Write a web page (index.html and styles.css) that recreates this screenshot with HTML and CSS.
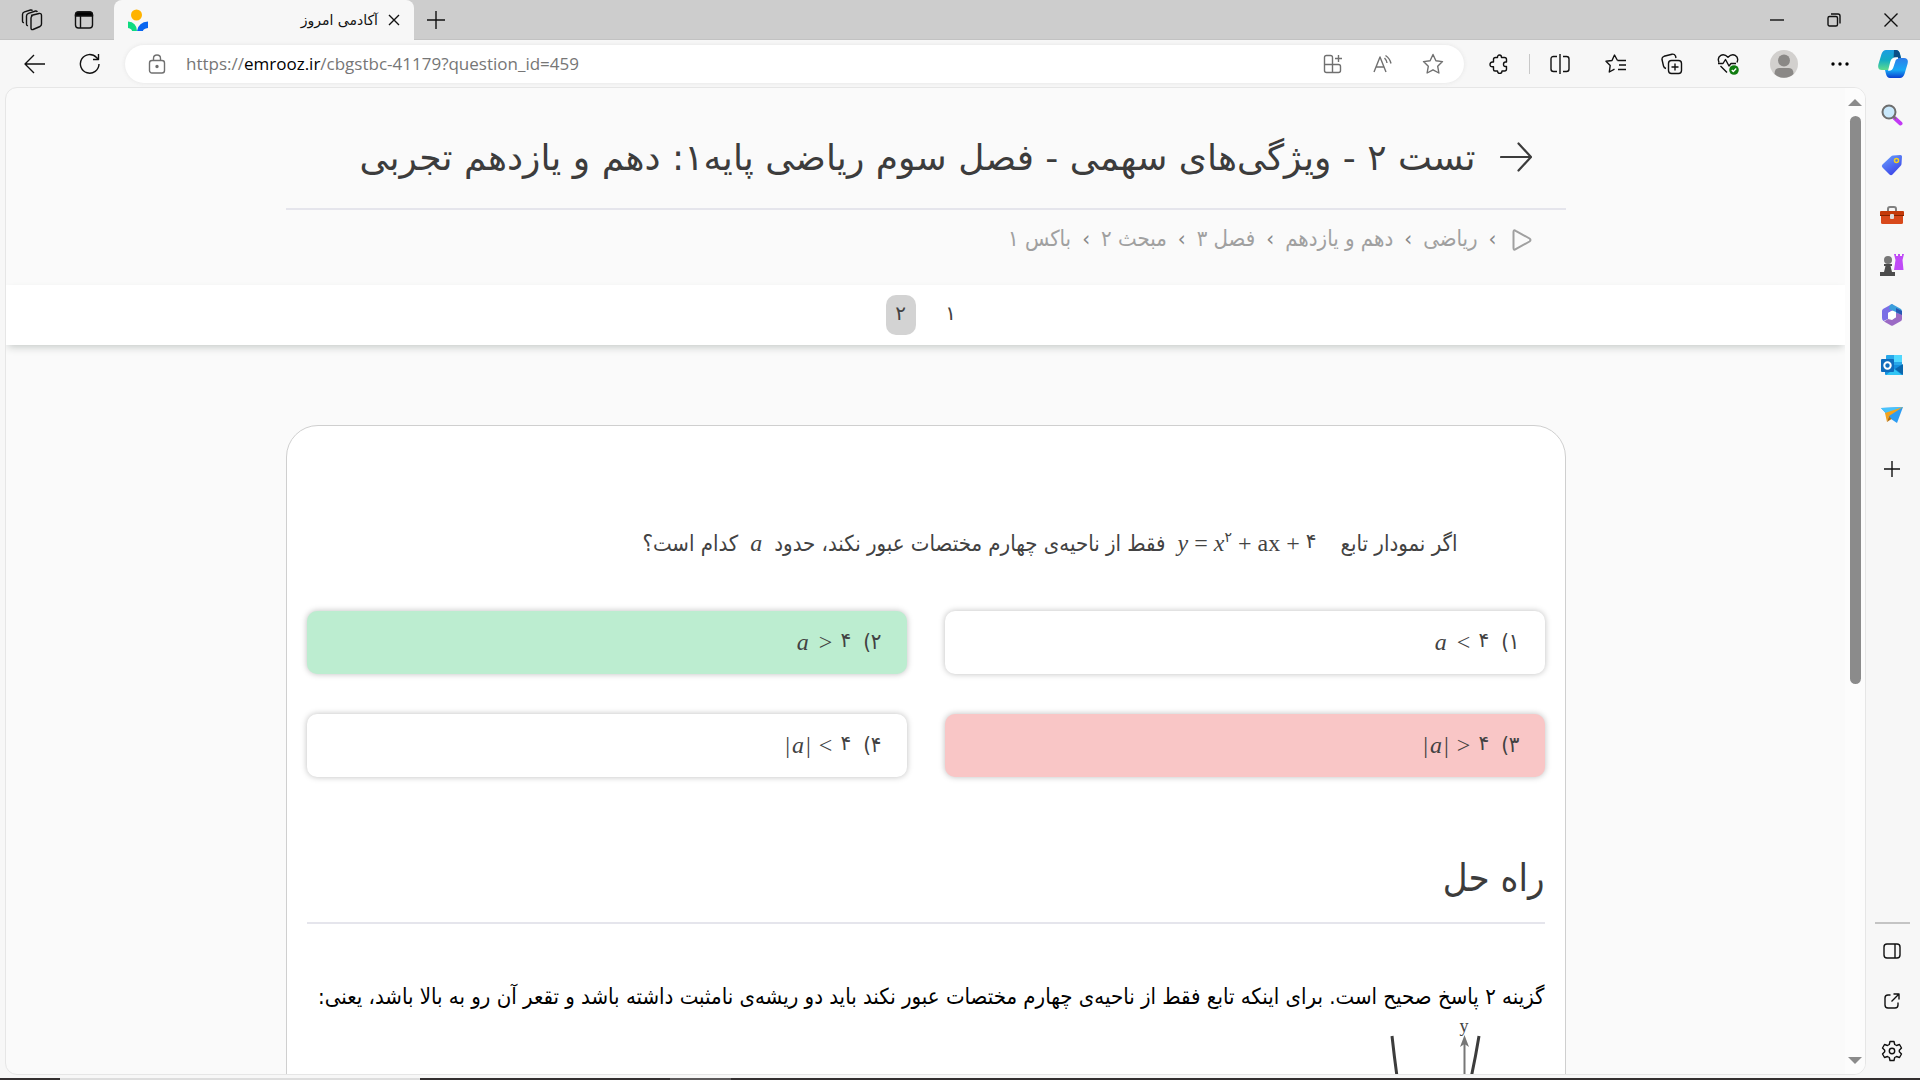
FILE: index.html
```html
<!DOCTYPE html>
<html lang="fa">
<head>
<meta charset="utf-8">
<title>آکادمی امروز</title>
<link rel="stylesheet" href="styles.css">
</head>
<body>
<div class="window">
  <header class="tabstrip">
    <button class="strip-btn" aria-label="Workspaces"><svg width="22" height="22" viewBox="0 0 22 22" class="line"><path d="M10 6.500 18 4.500Q20.500 4 20.500 6.500V15Q20.500 16.500 19 17.500L12 20.500Q10 21 10 19V9Q10 7 12 6.300M7 16.500Q5.500 17 5.500 15V7Q5.500 5 7.500 4.300L14.500 2Q16 1.700 16.300 3M3 13.500Q1.500 14 1.500 12V5.500Q1.500 3.500 3.500 2.800L9.500 1Q11 .8 11.500 1.700"/></svg></button>
    <button class="strip-btn" aria-label="Tab actions"><svg width="20" height="20" viewBox="0 0 20 20" class="line"><rect x="1.500" y="2" width="17" height="16" rx="3"/><path d="M1.500 6V5Q1.500 2 4.500 2H15.500Q18.500 2 18.500 5V6Z" fill="#000"/><path d="M6.500 6V18"/></svg></button>
    <div class="tab">
      <svg width="20" height="22" viewBox="0 0 20 22"><circle cx="8.500" cy="6" r="5.500" fill="#ffb300"/><path d="M0 12.500Q8.500 13 9 22H4Q4 20 0 19Z" fill="#0edb80"/><path d="M20 12.500Q10.500 13 9 22H15Q15 20 20 19Z" fill="#0866f0"/></svg>
      <span class="tab-title" dir="rtl">آکادمی امروز</span>
      <button class="plain" aria-label="Close tab"><svg width="12" height="12" viewBox="0 0 12 12" class="line"><path d="M1 1 11 11M11 1 1 11"/></svg></button>
    </div>
    <button class="strip-btn new-tab" aria-label="New tab"><svg width="18" height="18" viewBox="0 0 18 18" class="line"><path d="M9 0V18M0 9H18"/></svg></button>
    <div class="caption">
      <button aria-label="Minimize"><svg width="14" height="14" viewBox="0 0 14 14" class="line"><path d="M0 7H14"/></svg></button>
      <button aria-label="Restore"><svg width="14" height="14" viewBox="0 0 14 14" class="line"><rect x="1" y="3.500" width="9.500" height="9.500" rx="1.500"/><path d="M4 1H11Q13 1 13 3V10.500"/></svg></button>
      <button aria-label="Close"><svg width="14" height="14" viewBox="0 0 14 14" class="line"><path d="M.5.5 13.500 13.500M13.500.5.5 13.500"/></svg></button>
    </div>
  </header>

  <div class="toolbar">
    <button class="nav-btn" aria-label="Back"><svg width="22" height="20" viewBox="0 0 22 20" class="line"><path d="M1 10H21M10 1 1 10 10 19"/></svg></button>
    <button class="nav-btn" aria-label="Refresh"><svg width="22" height="22" viewBox="0 0 22 22" class="line"><path d="M20 11A9.300 9.300 0 1 1 17.500 4.500L19 6M19.500 1V6.500H14"/></svg></button>
    <form class="address">
      <svg width="18" height="20" viewBox="0 0 18 20" class="line dim"><rect x="1.500" y="6.500" width="15" height="12.500" rx="2.500"/><path d="M5.500 6.500V4.500Q5.500 1 9 1T12.500 4.500V6.500"/><circle cx="9" cy="12.500" r="1" fill="#555"/></svg>
      <a class="url" href="#" dir="ltr">https://<b>emrooz.ir</b>/cbgstbc-41179?question_id=459</a>
      <button type="button" class="addr-btn" aria-label="Apps"><svg width="20" height="20" viewBox="0 0 20 20" class="line dim"><path d="M9.500 19V3.500Q9.500 1.500 7.500 1.500H3.500Q1.500 1.500 1.500 3.500V16.500Q1.500 18.500 3.500 18.500H15.500Q17.500 18.500 17.500 16.500V12.500Q17.500 10.500 15.500 10.500H1.500M15.500 1V8M12 4.500H19"/></svg></button>
      <button type="button" class="addr-btn" aria-label="Read aloud"><svg width="20" height="20" viewBox="0 0 20 20" class="line dim"><path d="M1 18 7 3 13 18M3 13H11M11.500 4Q13.500 6 14 9M12.500 1.500Q17 4.500 18 9.500"/></svg></button>
      <button type="button" class="addr-btn" aria-label="Add to favorites"><svg width="22" height="22" viewBox="0 0 22 22" class="line dim"><path d="M11 1.500 13.900 7.800 20.500 8.600 15.700 13.300 16.900 20 11 16.800 5.100 20 6.300 13.300 1.500 8.600 8.100 7.800Z"/></svg></button>
    </form>
    <div class="tools">
      <button aria-label="Extensions"><svg width="20" height="20" viewBox="0 0 20 20" class="line"><path d="M6.500 3.500H8.500Q8.500 1 10.500 1T12.500 3.500H15.500Q17.500 3.500 17.500 5.500V8H16.500Q14.500 8 14.500 10.300T16.500 12.500H17.500V15Q17.500 17 15.500 17H13Q13 19.500 10.800 19.500T8.500 17H6Q4.500 17 4.500 15.500V12.800H3.500Q1 12.800 1 10.500T3.500 8H4.500V5.500Q4.500 3.500 6.500 3.500Z"/></svg></button>
      <span class="tools-rule"></span>
      <button aria-label="Split screen"><svg width="20" height="20" viewBox="0 0 20 20" class="line"><path d="M7 2.500H3.500Q1 2.500 1 5V15Q1 17.500 3.500 17.500H7M10 0V20M13 2.500H16.500Q19 2.500 19 5V15Q19 17.500 16.500 17.500H13"/></svg></button>
      <button aria-label="Favorites"><svg width="22" height="20" viewBox="0 0 22 20" class="line"><path d="M12.500 6.500 9.500 1 7 6.500 1 7.300 5.200 11.500 4.300 18 9.500 15.200M12.500 6.500H21M14 11H21M13 15.500H21"/></svg></button>
      <button aria-label="Collections"><svg width="22" height="22" viewBox="0 0 22 22" class="line"><rect x="7.500" y="7.500" width="13" height="13" rx="3"/><path d="M14 10.500V17.500M10.500 14H17.500M5 15.500Q3 15 2.500 13L1 6.500Q.7 4 3 3.300L11 1.200Q13.500.8 14.500 3L15 5"/></svg></button>
      <button aria-label="Browser essentials"><svg width="22" height="22" viewBox="0 0 22 22" class="line"><path d="M2 9.500Q0 4.500 3.800 2.300 7.500.5 11 4.300 14.500.5 18.200 2.300 22 4.500 20 9.500M1 10.500H6L8.500 6.500 12 13 14 10.500H19M3.500 13 10 19.500"/><circle cx="17" cy="17" r="4.800" fill="#107c10" stroke="none"/><path d="M14.800 17 16.300 18.500 19.200 15.500" stroke="#fff"/></svg></button>
      <button aria-label="Profile"><svg width="28" height="28" viewBox="0 0 28 28"><circle cx="14" cy="14" r="14" fill="#d2d0ce"/><circle cx="14" cy="10.500" r="6" fill="#8a8886"/><path d="M4.500 24Q4.500 18 9 18H19Q23.500 18 23.500 24A14 14 0 0 1 4.500 24Z" fill="#8a8886"/></svg></button>
      <button aria-label="More"><svg width="18" height="4" viewBox="0 0 18 4"><circle cx="2" cy="2" r="1.700"/><circle cx="9" cy="2" r="1.700"/><circle cx="16" cy="2" r="1.700"/></svg></button>
    </div>
    <button class="copilot" aria-label="Copilot"><svg width="30" height="28" viewBox="0 0 30 28"><defs><linearGradient id="c1" x2="0" y2="1"><stop stop-color="#1b9de2"/><stop offset=".5" stop-color="#13acc4"/><stop offset="1" stop-color="#5fdc8c"/></linearGradient><linearGradient id="c2" x2="0" y2="1"><stop stop-color="#2f7de8"/><stop offset=".6" stop-color="#18a9f5"/><stop offset="1" stop-color="#0b3fd0"/></linearGradient></defs><path d="M8 0H18Q21 0 22 4L23 8H19Q16 8 15 12L13 18Q12 20 10 20H4Q-1 20 .5 14L3.500 4Q5 0 8 0Z" fill="url(#c1)"/><path d="M16 0H18Q21 0 22 4L23 8H19Q16.500 8 15.500 10Z" fill="#0b4f86"/><path d="M22 28H12Q9 28 8 24L7 20H10Q14 20 15 16L17 10Q18 8 20 8H26Q31 8 29.500 14L26.500 24Q25 28 22 28Z" fill="url(#c2)"/><path d="M18 8H20Q18 8 17 10L15 16Q14 20 11 20L13 12Q14 8 18 8Z" fill="#fff" stroke="#fff" stroke-width="1.500"/></svg></button>
  </div>

  <div class="middle">
    <div class="viewport">
      <main class="page" dir="rtl">
        <div class="wrap">
          <div class="title-row">
            <button class="plain" aria-label="بازگشت"><svg width="32" height="30" viewBox="0 0 32 30" class="line thick"><path d="M1 15H31M18.500 1.500 31 15 18.500 28.500"/></svg></button>
            <h1>تست ۲ - ویژگی‌های سهمی - فصل سوم ریاضی پایه۱: دهم و یازدهم تجربی</h1>
          </div>
          <nav class="crumbs">
            <a href="#" class="crumb-home" aria-label="خانه"><svg width="20" height="22" viewBox="0 0 20 22" class="crumb-icon"><path d="M1.500 3Q1.500 .5 3.700 1.800L17.500 9.500Q19.500 11 17.500 12.500L3.700 20.200Q1.500 21.500 1.500 19Z"/></svg></a>
            <span>›</span><a href="#">ریاضی</a>
            <span>›</span><a href="#">دهم و یازدهم</a>
            <span>›</span><a href="#">فصل ۳</a>
            <span>›</span><a href="#">مبحث ۲</a>
            <span>›</span><a href="#">باکس ۱</a>
          </nav>
        </div>
        <nav class="pager">
          <button>۱</button>
          <button class="current">۲</button>
        </nav>
        <section class="card">
          <p class="question">اگر نمودار تابع<span class="math eq" dir="ltr"><i>y</i><span>=</span><span><i>x</i><sup>۲</sup></span><span>+</span><span>ax</span><span>+</span><span class="num">۴</span></span>فقط از ناحیه‌ی چهارم مختصات عبور نکند، حدود<span class="math var" dir="ltr"><i>a</i></span>کدام است؟</p>
          <div class="options">
            <button class="option"><span>۱)</span><span class="math" dir="ltr"><i>a</i><span>&lt;</span><span class="num">۴</span></span></button>
            <button class="option right"><span>۲)</span><span class="math" dir="ltr"><i>a</i><span>&gt;</span><span class="num">۴</span></span></button>
            <button class="option wrong"><span>۳)</span><span class="math" dir="ltr"><span>|<i>a</i>|</span><span>&gt;</span><span class="num">۴</span></span></button>
            <button class="option"><span>۴)</span><span class="math" dir="ltr"><span>|<i>a</i>|</span><span>&lt;</span><span class="num">۴</span></span></button>
          </div>
          <h2>راه حل</h2>
          <p class="solution">گزینه ۲ پاسخ صحیح است. برای اینکه تابع فقط از ناحیه‌ی چهارم مختصات عبور نکند باید دو ریشه‌ی نامثبت داشته باشد و تقعر آن رو به بالا باشد، یعنی:</p>
          <figure class="graph">
            <figcaption dir="ltr">y</figcaption>
            <svg width="120" height="140" viewBox="0 20 120 140"><path d="M12 21Q24 130 40 150Q76 160 99 21" fill="none" stroke="#3c3c3c" stroke-width="3"/><path d="M84.500 24V160" stroke="#777" stroke-width="2"/><path d="M84.500 20 80 32 84.500 29 89 32Z" fill="#777"/></svg>
          </figure>
        </section>
      </main>
      <div class="scrollbar">
        <svg width="14" height="8" viewBox="0 0 14 8"><path d="M7 1 14 8H0Z"/></svg>
        <div class="track"><div class="thumb"></div></div>
        <svg width="14" height="8" viewBox="0 0 14 8"><path d="M7 7 14 0H0Z"/></svg>
      </div>
    </div>

    <aside class="sidebar">
      <button aria-label="Search"><svg width="22" height="22" viewBox="0 0 22 22"><path d="M13.500 14 19.500 19.500" stroke="#c239f5" stroke-width="4" stroke-linecap="round"/><path d="M12 12 15 15" stroke="#777" stroke-width="2"/><circle cx="8" cy="8" r="6.500" fill="#c9e8fb" stroke="#6d6d6d" stroke-width="2"/></svg></button>
      <button aria-label="Shopping"><svg width="22" height="22" viewBox="0 0 22 22"><defs><linearGradient id="t" x1="0" x2=".6" y2="1"><stop stop-color="#6aa5ff"/><stop offset="1" stop-color="#3c45e8"/></linearGradient></defs><path d="M12 1.500 19.500 1Q21 1 21 2.500L20.500 10Q20.500 11 19.500 12L11.500 20.500Q10 22 8.500 20.500L1.500 13.500Q0 12 1.500 10.500L10 2.500Q11 1.500 12 1.500Z" fill="url(#t)"/><circle cx="15.500" cy="6.500" r="2" fill="#4b73f0" stroke="#f7d21c" stroke-width="1.500"/></svg></button>
      <button aria-label="Tools"><svg width="24" height="20" viewBox="0 0 24 20"><path d="M8 6V4Q8 2 10 2H14Q16 2 16 4V6" fill="none" stroke="#808080" stroke-width="2"/><rect x="1" y="6" width="22" height="13" rx="1.500" fill="#d8491b"/><rect x="0" y="6" width="24" height="5" rx="1" fill="#c43a0a"/><rect x="0" y="10" width="24" height="1" fill="#852400"/><rect x="10" y="9" width="4" height="5" rx="1" fill="#ddd"/></svg></button>
      <button aria-label="Games"><svg width="24" height="24" viewBox="0 0 24 24"><path d="M14 1H16V3H18V1H20V3H22V1H24L22.500 7 23.500 17H14L15.500 7Z" fill="#c04af7"/><circle cx="8" cy="7" r="4" fill="#777"/><path d="M4 11H12V13H10.500L12 19H15V23H0V19H4L5.500 13H4Z" fill="#4c4c4c"/></svg></button>
      <button aria-label="Microsoft 365"><svg width="22" height="22" viewBox="0 0 22 22"><path d="M11 0 2 5Q1 6 1 7V14Q1 16 2.500 17L7 15V9L15 4.500Z" fill="#7a6ee6"/><path d="M9 1 11 0 20 5Q21 6 21 8V14L15 12V8L8 5Z" fill="#3b9fdc"/><path d="M21 10V15Q21 16.500 20 17L12 21.500Q11 22 10 21.500L3 17.500 7 15 11 16 15 13V9Z" fill="#9b6ac5"/><path d="M15 8 21 11V7L15 4Z" fill="#2657b5"/><path d="M11 6.800 15 9V13.300L11 15.500 7 13.300V9Z" fill="#fff"/></svg></button>
      <button aria-label="Outlook"><svg width="22" height="22" viewBox="0 0 22 22"><rect x="5" y="1" width="16" height="14" rx="1" fill="#28a8ea"/><path d="M13 1H20Q21 1 21 2V8H13Z" fill="#50d9ff"/><path d="M4 11H22V20Q22 21 21 21H5Q4 21 4 20Z" fill="#1490df"/><path d="M22 10V21L14 15Z" fill="#0a67ad"/><path d="M5 21H21L13 15Z" fill="#32c5f4"/><rect x="0" y="5" width="13" height="13" rx="1" fill="#0f6cbd"/><circle cx="6.500" cy="11.500" r="3.200" fill="none" stroke="#fff" stroke-width="2"/></svg></button>
      <button aria-label="Drop"><svg width="22" height="18" viewBox="0 0 22 18"><path d="M0 2 22 1 16 17 10 13Z" fill="#2c9cf2"/><path d="M0 2 22 1 7 9Z" fill="#49c3fb"/><path d="M4 7 22 1 8 10 6 16Z" fill="#f4a21b"/><path d="M8 10 10.500 13 6 16Z" fill="#b66d08"/></svg></button>
      <button class="customize" aria-label="Customize"><svg width="16" height="16" viewBox="0 0 16 16" class="line"><path d="M8 0V16M0 8H16"/></svg></button>
      <span class="side-rule"></span>
      <button aria-label="Hide sidebar"><svg width="18" height="16" viewBox="0 0 18 16" class="line"><rect x="1" y="1" width="16" height="14" rx="3"/><path d="M12 1V15"/></svg></button>
      <button aria-label="Open link"><svg width="16" height="16" viewBox="0 0 16 16" class="line"><path d="M6.500 2H4Q1 2 1 5V12Q1 15 4 15H11Q14 15 14 12V9.500M9.500 1H15V6.500M15 1 7.500 8.500"/></svg></button>
      <button aria-label="Settings"><svg width="22" height="22" viewBox="0 0 22 22" class="line"><path d="M9 1.500H13L13.700 4.500 15.500 5.500 18.500 4.500 20.500 8 18.300 10.200V11.800L20.500 14 18.500 17.500 15.500 16.500 13.700 17.500 13 20.500H9L8.300 17.500 6.500 16.500 3.500 17.500 1.500 14 3.700 11.800V10.200L1.500 8 3.500 4.500 6.500 5.500 8.300 4.500Z"/><circle cx="11" cy="11" r="2.700"/></svg></button>
    </aside>
  </div>
  <footer class="taskbar"></footer>
</div>
</body>
</html>
```
FILE: styles.css
```css
* { box-sizing: border-box; }
body {
  margin: 0;
  background: #f7f7f7;
  font-family: "DejaVu Sans", sans-serif;
  color: #424242;
}
button { border: 0; padding: 0; background: none; color: inherit; font: inherit; display: flex; align-items: center; justify-content: center; }
a { color: inherit; text-decoration: none; }
svg { display: block; flex: none; }
.line { fill: none; stroke: #111; stroke-width: 1.400; stroke-linejoin: round; }
.dim { stroke: #707070; }
.thick { stroke: #3c3c3c; stroke-width: 2.200; stroke-linecap: round; }
.window { height: 100vh; display: flex; flex-direction: column; overflow: hidden; }

.tabstrip { height: 40px; flex: none; display: flex; padding: 0 1px 0 6px; background: #cdcdcd; box-shadow: inset 0 -1px #c2c2c2; }
.strip-btn { width: 52px; }
.tab { width: 300px; margin-left: 4px; display: flex; align-items: center; gap: 10px; padding: 0 14px; background: #f7f7f7; border-radius: 8px 8px 0 0; }
.tab-title { flex: 1; font-size: 14px; color: #111; }
.new-tab { width: 44px; }
.caption { display: flex; margin-left: auto; }
.caption button { width: 57px; }

.toolbar { height: 47px; flex: none; display: flex; align-items: center; padding: 0 7px; }
.nav-btn { width: 55px; height: 40px; }
.address { flex: 1; height: 38px; margin: 0 7px 0 8px; padding: 0 6px 0 23px; display: flex; align-items: center; border-radius: 19px; background: #fff; box-shadow: 0 0 4px #e4e4e4; }
.url { flex: 1; margin-left: 20px; font: 17px "Open Sans", sans-serif; color: #767676; }
.url b { font-weight: 400; color: #000; }
.addr-btn { width: 50px; height: 34px; }
.tools { display: flex; align-items: center; }
.tools button { width: 56px; height: 36px; }
.tools-rule { width: 1px; height: 20px; background: #c8c8c8; margin: 0 2px; }
.copilot { width: 40px; margin-left: 5px; }

.middle { flex: 1; min-height: 0; display: flex; }
.viewport { flex: 1; min-width: 0; margin: 0 0 3px 5px; display: flex; overflow: hidden; border: 1px solid #e6e6e6; border-radius: 12px; background: #fafafa; }
.page { flex: 1; min-width: 0; overflow: hidden; }
.scrollbar { width: 20px; flex: none; display: flex; flex-direction: column; align-items: center; padding: 10px 0 9px; background: #fcfcfc; }
.scrollbar svg { fill: #8b8b8b; }
.track { flex: 1; width: 11px; padding: 10px 0; }
.thumb { height: 61%; border-radius: 6px; background: #8b8b8b; }

.wrap, .card { width: 1280px; max-width: 100%; margin: 0 auto; }
.title-row { height: 122px; display: flex; align-items: center; gap: 24px; padding: 18px 34px 0; border-bottom: 2px solid #e5e5ec; }
h1, h2 { margin: 0; font-size: 36px; font-weight: 400; color: #3c3c3c; white-space: nowrap; }
.crumbs, .question, .option, .solution, h2 { font-family: "DejaVu Sans Condensed", "DejaVu Sans", sans-serif; }
.crumbs { height: 75px; display: flex; align-items: flex-start; gap: 11px; padding: 15px 34px 0; font-size: 22px; line-height: 28px; color: #a0a0a0; }
.crumbs span { color: #888; }
.crumb-home { padding: 4px 0 0 4px; }
.crumb-icon { fill: none; stroke: #a0a0a0; stroke-width: 2; }
.pager { height: 60px; display: flex; justify-content: center; align-items: center; gap: 20px; background: #fff; box-shadow: 0 4px 8px -2px #c4c8c6; }
.pager button { width: 30px; height: 40px; padding-bottom: 4px; border-radius: 10px; font-size: 20px; }
.pager .current { background: #d3d3d3; }

.card { margin-top: 80px; padding: 98px 20px 0; border: 1px solid #cfcfcf; border-radius: 32px; background: #fff; }
.question { margin: 0; padding: 0 87px; font-size: 22px; line-height: 40px; }
.math { display: inline-flex; gap: 6px; align-items: baseline; font-family: "Liberation Serif", "DejaVu Sans", serif; font-size: 24px; line-height: 24px; }
.eq { margin: 0 24px 0 12px; }
.var { margin: 0 12px; }
.math sup { font-size: 14px; line-height: 1; }
.num { font-size: 20px; align-self: flex-start; line-height: 20px; }
.options { display: grid; grid-template-columns: 1fr 1fr; gap: 40px 38px; margin-top: 47px; }
.option { height: 63px; justify-content: flex-start; gap: 12px; padding: 0 25px 2px; border-radius: 10px; background: #fff; box-shadow: 0 0 6px #bdbdbd; font-size: 22px; }
.option .math { gap: 8px; }
.option i { margin: 0 2px; }
.right { background: #bcedd0; }
.wrong { background: #f9c6c6; }
h2 { margin-top: 67px; height: 80px; font-size: 38px; line-height: 68px; border-bottom: 2px solid #e5e5ec; }
.solution { margin: 53px 0 0; font-size: 22px; line-height: 40px; color: #000; white-space: nowrap; }
.graph { width: 120px; margin: 0 45px 0 0; }
.graph figcaption { padding-right: 31px; font: 18px/18px "Liberation Serif", serif; color: #444; text-align: right; }

.sidebar { width: 54px; flex: none; display: flex; flex-direction: column; align-items: center; padding: 3px 2px 2px 0; }
.sidebar button { width: 48px; height: 50px; }
.sidebar .customize { margin-top: 4px; }
.side-rule { width: 35px; height: 2px; margin-top: auto; margin-bottom: 2px; background: #c4c4c4; }
.taskbar { height: 2px; flex: none; background: linear-gradient(90deg, #332f30 60px, #ddd 60px 420px, #332f30 420px 670px, #5d5a5b 670px 731px, #332f30 731px); }
```
